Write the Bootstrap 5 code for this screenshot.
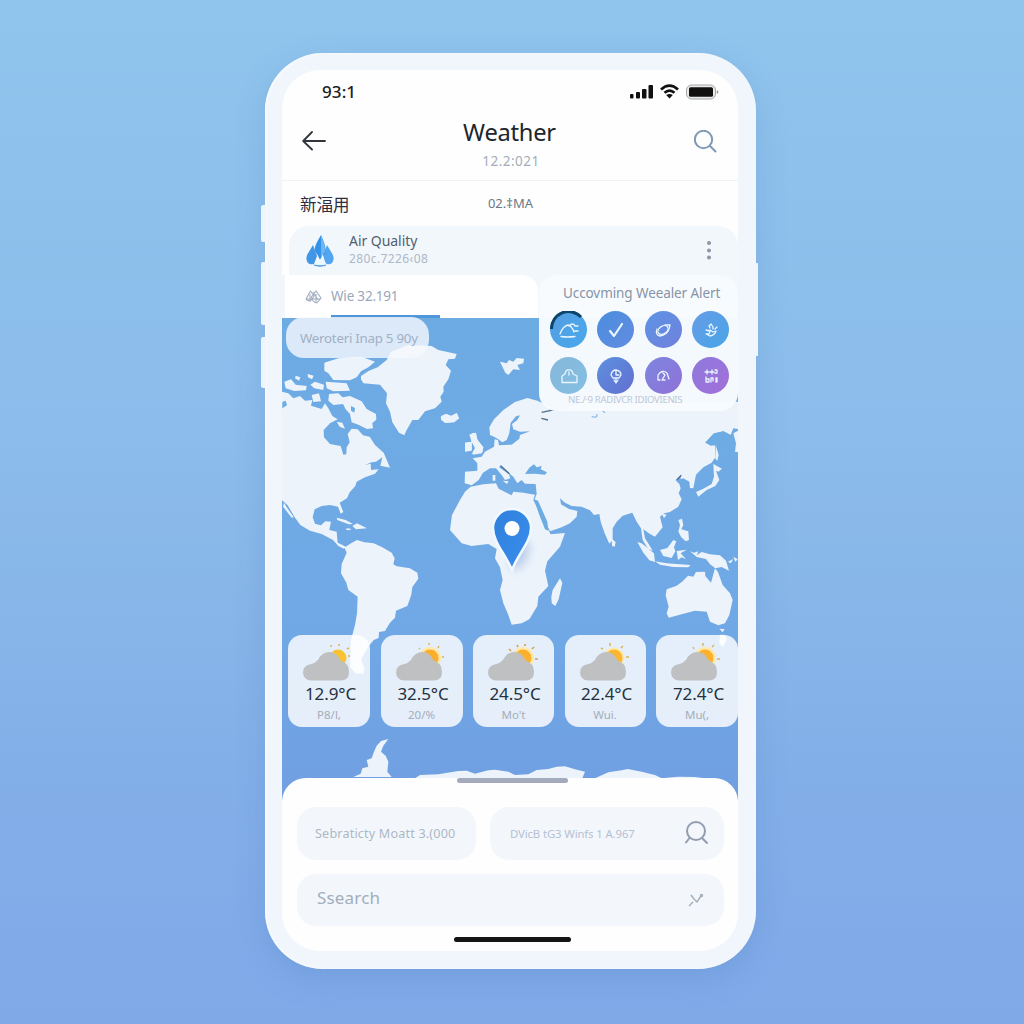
<!DOCTYPE html>
<html lang="en">
<head>
<meta charset="utf-8">
<meta name="viewport" content="width=device-width, initial-scale=1">
<title>Weather</title>
<link href="https://cdn.jsdelivr.net/npm/bootstrap@5.3.0/dist/css/bootstrap.min.css" rel="stylesheet">
<style>
  body{width:1024px;height:1024px;overflow:hidden;font-family:"Noto Sans","Noto Sans CJK SC",sans-serif;
    background:linear-gradient(180deg,#90c5ed 0%,#8bbbea 45%,#83afe8 75%,#80a9e8 100%);line-height:1.2}
  .phone{width:491px;height:916px;margin:53px 0 0 265px;padding:17px 18px 18px 17px;border-radius:58px;background:#f0f6fc;
    box-shadow:0 10px 30px rgba(70,120,190,.24),inset 1px 0 3px #fff}
  .side-key{position:absolute;width:5px;background:#edf5fd;border-radius:2px 0 0 2px;left:-4px}
  .side-key.k1{top:152px;height:37px}.side-key.k2{top:209px;height:63px}.side-key.k3{top:284px;height:51px}
  .side-key.k4{top:210px;height:93px;left:490px;width:3px}
  .screen{border-radius:38px;background:#fefefe}
  .status{height:44px;padding:0 18px 0 40px}
  .clock{font:500 17px "Noto Sans";color:#1d2125;letter-spacing:.1px;margin-top:-2px}
  .topbar{height:67px;border-bottom:1px solid #eef2f6;padding:0 20px}
  .app-title{font-size:23.7px;color:#20262c;letter-spacing:-.25px;line-height:26px;padding-top:1px;margin-left:-3px}
  .app-date{font-size:13.5px;color:#a3adb9;letter-spacing:.5px;line-height:18px;margin-top:7px}
  .meta-row{height:45px;padding:0 18px}
  .place{font:400 16.5px "Noto Sans CJK SC";color:#2b2d40}
  .meta-time{font-size:13px;color:#6c7787;padding-right:187px}
  .air{height:49px;margin-left:7px;border-radius:20px 20px 0 0;background:#f2f7fc;padding:0 25px 0 17px}
  .air-name{font-size:14px;color:#505f72;line-height:16px;letter-spacing:-.05px;margin-top:-2px}
  .air-sub{font-size:12px;color:#adb8c6;line-height:16px;letter-spacing:.4px;margin-top:2px}
  .tabs-zone{height:43px;background:#f2f7fc;padding-left:3px}
  .wind-tab{width:253px;height:43px;border-radius:0 16px 0 0;background:#fff;padding-left:20px}
  .wind-label{height:43px;font-size:13.5px;color:#9ba7ba;width:109px;border-bottom:3px solid #4f97d9;line-height:43px;letter-spacing:-.2px;white-space:nowrap}
  .mapzone{height:460px}
  .worldmap{position:absolute;left:0;top:0;width:456px;height:482px}
  .map-pill{position:absolute;left:4px;top:-1px;width:143px;height:41px;border-radius:18px;background:rgba(246,249,254,.8);font-size:13.3px;color:#a3afc5;padding-left:14px;line-height:42px;white-space:nowrap;letter-spacing:-.25px}
  .alerts{position:absolute;right:0;top:-43px;width:199px;height:136px;border-radius:18px;background:rgba(248,251,254,.975);padding-top:9px}
  .alert-title{font-size:13.5px;color:#8693a6;line-height:19px;letter-spacing:-.09px;padding-left:24px;white-space:nowrap}
  .alert-grid{display:grid;grid-template-columns:repeat(4,37px);column-gap:10.4px;row-gap:9px;padding:8px 0 0 11px}
  .dot{width:37px;height:37px;border-radius:50%}
  .dot svg{width:20px;height:20px;fill:none;stroke:#e9f6ff;stroke-width:1.3;stroke-linecap:round;stroke-linejoin:round}
  .alert-note{font-size:9.6px;color:#bcc7d6;line-height:10px;padding-left:29px;margin-top:1px;white-space:nowrap;letter-spacing:-.35px}
  .pin{position:absolute;left:204px;top:180px}
  .forecast{position:absolute;left:6px;top:317px;width:450px;display:grid;grid-template-columns:82px 82px 81px 81px 82px;justify-content:space-between}
  .day{height:92px;border-radius:14px;background:rgba(255,255,255,.82);padding-top:8px}
  .day svg{width:62px;height:40px;display:block;margin-left:10px}
  .deg{font-size:17px;color:#26313f;line-height:20px;letter-spacing:-.1px;margin-top:1px;padding-left:3px}
  .cond{font-size:11.5px;color:#a4adb9;line-height:16px;margin-top:3px}
  .sheet{position:relative;height:173px;border-radius:24px 24px 38px 38px;background:#fefefe;padding:29px 14px 0 15px}
  .grabber{position:absolute;left:175px;top:0;width:111px;height:5px;border-radius:3px;background:#a3aabd}
  .field{height:53px;border-radius:19px;background:#f3f7fb;color:#adb7c6;font-size:12.6px;letter-spacing:.18px;white-space:nowrap}
  .home-bar{width:117px;height:5px;border-radius:3px;background:#141414;margin:11px 0 0 157px}
</style>
<script src="https://cdn.jsdelivr.net/npm/bootstrap@5.3.0/dist/js/bootstrap.bundle.min.js"></script>
</head>
<body class="d-flow-root">
<svg width="0" height="0" class="position-absolute"><defs>
  <path id="cloud" d="M13 37.500A8 8 0 0 1 5 29.500Q5 22 13.500 21Q17 20 20 17Q24 9 31.500 9Q39 9 42 17Q51 20 51 29Q51 37.500 43 37.500Z" fill="#bfc0c2"/>
</defs></svg>
<div class="d-flex">
<div class="phone position-relative flex-shrink-0">
  <i class="side-key k1"></i><i class="side-key k2"></i><i class="side-key k3"></i><i class="side-key k4"></i>
  <main class="screen h-100 position-relative">
    <div class="status d-flex justify-content-between align-items-center">
      <span class="clock">93:1</span>
      <svg width="91" height="18" viewBox="0 0 91 18">
        <g fill="#111"><rect x="1" y="11" width="3.500" height="4.500" rx="1"/><rect x="7" y="9" width="4" height="6.500" rx="1"/><rect x="13" y="6" width="4.500" height="9.500" rx="1"/><rect x="19.500" y="2" width="4.500" height="13.500" rx="1"/></g>
        <path d="M32 6.500Q40.500-1.200 49 6.500M35.500 9.800Q40.500 5.300 45.500 9.800" fill="none" stroke="#111" stroke-width="2.700"/><path d="M37.200 12Q40.500 9.800 43.800 12L40.500 15.500Z" fill="#111"/>
        <rect x="57.500" y="2" width="29" height="14" rx="5" fill="#e9ece8" stroke="#a4a6a5"/><rect x="60" y="4.300" width="24" height="9.400" rx="1.500" fill="#11120f"/><path d="M88.500 7.500v3" stroke="#999" stroke-width="1.500"/>
      </svg>
    </div>
    <header class="topbar d-flex justify-content-between">
      <svg class="mt-3" width="26" height="22" viewBox="0 0 26 22" fill="none" stroke="#30363c" stroke-width="1.800" stroke-linecap="round" stroke-linejoin="round"><path d="M23 11H1.500M10 2L1.200 11L10 19.500"/></svg>
      <div class="text-center"><div class="app-title mt-1">Weather</div><div class="app-date">12.2:021</div></div>
      <svg class="mt-3" width="24" height="24" viewBox="0 0 24 24" fill="none" stroke="#7e99b6" stroke-width="2" stroke-linecap="round"><circle cx="9.500" cy="9.500" r="8.700"/><path d="M16 16L21.500 21.500"/></svg>
    </header>
    <div class="meta-row d-flex justify-content-between align-items-center"><span class="place">新湢用</span><span class="meta-time">02.‡MA</span></div>
    <section class="air d-flex align-items-center">
      <svg width="28" height="33" viewBox="0 0 28 33">
        <path d="M7 11C3 18 0 21 .4 25C1 30 5 31 8 30L11 22Z" fill="#4396e6"/><path d="M21 11C25 18 28 21 27.600 25C27 30 23 31 20 30L17 22Z" fill="#54a5ef"/><path d="M15 1C11 8 8 13 9 17L14 26L19 20C21 15 18 8 15 1Z" fill="#3592e9"/><path d="M15 1V23L19 18C20 13 17 7 15 1Z" fill="#6db6f4"/><path d="M11 20L14 26L17 20L18 28L22 31H8L11 28Z" fill="#eff8ff"/><path d="M8 31Q14 33 20 31" stroke="#3f93e5" stroke-width="1.300" fill="none"/>
      </svg>
      <div class="flex-grow-1" style="padding-left:15px"><div class="air-name">Air Quality</div><div class="air-sub">280c.7226‹08</div></div>
      <svg width="8" height="22" viewBox="0 0 8 22" fill="#8997a9"><circle cx="4" cy="3" r="2"/><circle cx="4" cy="10.500" r="2"/><circle cx="4" cy="17.500" r="2"/></svg>
    </section>
    <div class="tabs-zone">
      <div class="wind-tab d-flex align-items-center">
        <svg width="17" height="16" viewBox="0 0 17 16" fill="none" stroke="#a4afc0" stroke-width="1.100"><path d="M5.500 2L1 10Q3 13 7 10.500L9 7ZM11 2L6.500 8Q7 13 12 14L16 9ZM1 10H15M8 3L13 11M5 5V13M11 5V13"/></svg>
        <div class="wind-label" style="margin-left:9px">Wie 32.191</div>
      </div>
    </div>
    <section class="mapzone position-relative">
      <svg class="worldmap" viewBox="282 318 456 482">
        <defs><linearGradient id="sea" x2="0" y2="1"><stop stop-color="#6dabe3"/><stop offset=".6" stop-color="#70a9e6"/><stop offset="1" stop-color="#709fe2"/></linearGradient></defs>
        <rect x="282" y="318" width="456" height="482" fill="url(#sea)"/>
        <g fill="#ecf3fb">
          <!-- North America, Arctic islands and Greenland -->
          <g transform="translate(275 340) scale(.33333)">
            <path d="M20 155L40 160L55 175L75 168L90 182L112 180L108 197L140 207L150 190L160 205L172 228L188 238L165 250L146 270L147 292L165 312L197 318L205 344L214 343L215 322L224 307L218 282L230 266L248 268L264 286L284 290L300 315L326 338L330 347L345 383L316 377L322 352L303 365L290 367L270 375L287 371L288 390L311 388L300 401L270 412L245 425L241 438L224 457L216 475L194 488L205 516L197 521L189 500L165 495L140 498L119 508L113 532L120 551L138 556L151 544L168 545L163 570L185 575L188 608L204 616L212 622L206 626L190 618L174 600L140 582L105 572L76 555L58 530L38 496L20 480Z"/>
            <path d="M27 488L36 503L56 532L50 533L24 500ZM185 533L212 540L234 552L221 553L187 540ZM232 558L246 550L276 565L243 568ZM215 565L228 566L225 571L213 569Z"/>
            <path d="M258 108L282 92L308 82L335 60L348 35L400 15L470 18L490 30L545 42L540 56L520 58L512 75L528 92L520 118L505 140L506 155L496 170L500 185L480 205L450 214L430 240L412 240L402 258L395 270L388 286L372 278L352 247L345 215L333 190L336 160L315 134L265 130L258 118Z"/>
            <path d="M148 68L190 55L260 50L300 65L280 82L258 94L245 112L225 121L175 120L160 100L148 92ZM152 125L215 130L225 152L175 154L155 145ZM28 125L48 118L62 134L95 138L93 151L58 153L32 145ZM98 102L116 107L111 118L99 112ZM106 134L120 125L147 134L145 150L118 145ZM62 107L76 112L72 122L60 115ZM110 165L132 160L138 184L115 186ZM162 162L190 160L203 172L225 168L260 184L275 207L303 222L304 239L292 249L294 265L276 267L250 254L230 247L225 222L212 208L204 192L175 195L160 182ZM185 245L202 248L210 266L194 260Z"/>
            <path d="M498 228L512 222L530 228L545 219L552 235L538 247L515 248L500 240ZM592 280L603 278L608 300L625 322L622 337L590 342L600 324L588 302ZM571 308L590 305L590 330L571 333Z"/>
            <path d="M22 186L32 182L36 196L22 205ZM228 198L240 204L238 218L228 212Z" fill="#6dabe3"/>
          </g>
          <!-- South America -->
          <path transform="translate(275 500) scale(.33333)" d="M206 138L215 158L200 192L198 220L214 248L220 270L248 290L246 340L240 375L228 420L225 500L242 520L266 521L268 505L258 478L280 440L296 420L311 414L312 396L330 393L345 368L360 353L363 332L397 318L409 284L412 261L430 236L427 218L405 205L365 199L355 193L359 175L350 158L322 142L296 130L268 127L246 120L228 130L212 140Z"/>
          <!-- Europe, Asia and Africa -->
          <g transform="translate(440 340) scale(.33333)">
            <path d="M148 262L162 238L190 210L225 186L262 174L292 182L320 195L330 210L350 212L380 205L430 185L898 185V268L880 265L872 285L850 274L820 282L797 308L812 317L826 316L836 333L826 352L815 368L790 382L768 404L760 445L750 444L748 425L730 415L708 422L718 432L722 445L716 460L725 478L715 500L690 516L672 520L660 530L668 562L645 590L630 582L610 568L615 595L632 622L638 632L624 626L608 600L603 565L590 545L577 518L548 527L530 545L518 565L518 600L508 611L494 580L482 545L478 522L462 525L450 511L425 500L395 498L375 488L360 475L363 493L387 507L412 513L410 530L390 550L365 562L330 574L318 550L297 512L284 478L290 462L287 432L255 431L245 420L232 430L220 410L200 393L182 376L177 382L207 403L211 415L195 420L185 405L168 385L150 385L129 398L116 420L95 436L74 430L75 395L112 392L112 370L98 355L125 350L135 335L162 320L164 298L174 300L177 316L215 314L238 296L240 285L270 274L240 275L220 268L216 252L232 240L240 226L228 229L212 248L208 280L200 300L187 307L175 298L162 290L150 285Z"/>
            <path d="M92 440L130 433L168 430L176 446L215 466L220 455L250 458L285 464L280 480L300 520L325 570L332 583L375 579L360 620L322 664L315 692L325 738L295 770L292 798L268 838L245 850L215 854L205 825L190 790L180 750L188 720L180 682L165 655L170 627L145 612L95 618L65 610L46 588L30 570L36 525L60 480L75 455ZM360 715L367 728L356 778L346 798L335 790L334 770L338 750Z"/>
            <path d="M180 65L200 70L207 60L220 65L230 54L252 56L250 70L232 75L240 90L220 88L205 105L196 98ZM88 284L100 278L112 300L130 322L126 340L98 344L108 326L94 302ZM75 308L95 305L95 332L75 335ZM2 230L20 222L32 228L50 220L57 235L42 246L15 249L4 240ZM158 405L166 405L166 422L158 422ZM188 422L206 424L201 432Z"/>
            <path d="M255 402L268 383L282 373L290 382L305 378L302 388L321 397L315 404L285 401ZM282 478L294 482L322 545L325 572L315 568L298 525ZM706 422L722 406L722 420ZM795 308L822 280L850 274L872 285L862 308L850 316L836 318L838 334L826 352L826 316Z" fill="#6dabe3"/>
            <path d="M828 318L836 345L832 362L826 356ZM820 372L846 386L835 395L828 392L838 420L826 438L800 450L775 470L768 456L790 446L815 432L822 410ZM515 596L527 606L524 620L516 618Z"/>
            <path d="M182 377L208 401M710 420L724 406M305 217L344 209M304 235L324 240" fill="none" stroke="#526f8c" stroke-width="4"/>
            <path d="M455 230Q475 235 470 222M485 210L495 218" fill="none" stroke="#91bbe7" stroke-width="4"/>
            <path d="M880 280L898 270V338L885 335L888 310Z"/>
          </g>
          <!-- Southeast Asia and Australia -->
          <g transform="translate(480 500) scale(.33333)">
            <path d="M472 126L485 130L522 160L525 186L508 181L490 158ZM525 184L560 190L600 193L632 195L625 202L580 201L540 194ZM540 150L562 144L580 120L589 124L582 142L586 154L575 174L550 168ZM590 153L620 149L602 160L618 178L605 172L594 180ZM595 60L606 56L610 75L604 88L625 94L627 120L617 124L604 112L595 95L600 75ZM630 154L642 158L655 154L650 166L665 156L690 163L720 166L738 182L747 212L725 201L706 205L690 193L678 177L650 171ZM744 185L760 177L752 190ZM760 170L773 178L766 185ZM545 40L560 44L552 55Z"/>
            <path d="M560 268L590 257L608 244L624 227L640 230L648 216L675 215L676 228L693 248L705 205L714 216L728 255L750 280L758 300L748 345L735 370L715 376L690 365L680 335L645 332L605 343L566 353L560 340L566 320L557 286ZM718 386L734 388L728 397Z"/>
            <path d="M720 405Q740 400 739 418Q735 435 728 440L718 430Z"/>
          </g>
          <!-- Antarctica -->
          <path transform="translate(275 625) scale(.33333)" d="M235 456L257 446L262 430L280 425L275 405L290 400L297 380L305 362L318 348L340 342L325 362L318 380L332 392L340 410L337 440L350 456ZM420 460L435 450L490 448L550 438L575 437L600 446L640 436L660 434L700 440L720 450L760 448L785 435L820 432L845 425L870 424L900 433L930 440L922 460L960 460L1000 442L1040 436L1058 432L1100 440L1140 450L1160 460L1210 455L1260 456L1310 463V475H420Z"/>
        </g>
      </svg>
      <div class="map-pill">Weroteri Inap 5 90y</div>
      <aside class="alerts">
        <div class="alert-title">Uccovming Weealer Alert</div>
        <div class="alert-grid">
          <span class="dot d-flex align-items-center justify-content-center position-relative" style="background:linear-gradient(135deg,#579ce1,#47a9ec)"><svg class="position-absolute" viewBox="0 0 37 37" style="width:37px;height:37px;left:0;top:0"><path d="M1.500 18A17 17 0 0 1 31 6" stroke="#0b4569" stroke-width="3" stroke-linecap="butt"/></svg><svg viewBox="0 0 20 20"><path d="M1 14Q4 6 9 5Q13 6 15 12M10 6Q14 2 16 6H19M2 16.500Q8 17.500 16 16.500M16 11H19"/></svg></span>
          <span class="dot d-flex align-items-center justify-content-center" style="background:linear-gradient(135deg,#4b8ede,#628be0)"><svg viewBox="0 0 20 20"><path d="M4 11L8 16L16 4" stroke-width="2.200"/></svg></span>
          <span class="dot d-flex align-items-center justify-content-center" style="background:linear-gradient(135deg,#5c94e5,#7180dc)"><svg viewBox="0 0 20 20"><ellipse cx="10" cy="10" rx="5.500" ry="3.800" transform="rotate(-35 10 10)"/><path d="M4 9Q2 15 7 16Q14 15 16 9L17 5H12"/></svg></span>
          <span class="dot d-flex align-items-center justify-content-center" style="background:linear-gradient(135deg,#669ce7,#48a5e7)"><svg viewBox="0 0 20 20"><path d="M9 8L8 6L10 4L12 7V9M14 9L16 7M5 10L9 11L8 14H5L9 16Q14 15 15 11L12 12L9 10"/></svg></span>
          <span class="dot d-flex align-items-center justify-content-center" style="background:linear-gradient(135deg,#87b7da,#83bfe4)"><svg viewBox="0 0 20 20"><path d="M3 16.500V10L6 8Q7 3 10 4Q13 3 14 8L18 10V16.500ZM10 6V9"/></svg></span>
          <span class="dot d-flex align-items-center justify-content-center" style="background:linear-gradient(135deg,#5d91de,#626ed0)"><svg viewBox="0 0 20 20"><path d="M5 9Q6 4 10 4Q15 5 15 9L13 12H7ZM10 5V9H13M8 14L10 17L12 14M10 12V16"/></svg></span>
          <span class="dot d-flex align-items-center justify-content-center" style="background:linear-gradient(135deg,#7c86e0,#9070d7)"><svg viewBox="0 0 20 20"><path d="M5 14V9Q9 3 14 7L16 13M5 14H7M10 7L12 9L9 14H12"/></svg></span>
          <span class="dot d-flex align-items-center justify-content-center" style="background:linear-gradient(135deg,#8e79dc,#a26fd8)"><svg viewBox="0 0 20 20"><path d="M6 4V8M4 6H8M11 4V8M9 6H13M14 4H16V7H14M5 11V16H8V13H5M10 16V12H12V15M15 16V12H16V16"/></svg></span>
        </div>
        <div class="alert-note">NE./·9 RADIVCR IDIOVIENIS</div>
      </aside>
      <svg class="pin" width="70" height="86" viewBox="0 0 70 86">
        <defs><linearGradient id="pinfill" x1="0" x2="1" y2="1"><stop stop-color="#2f80dd"/><stop offset="1" stop-color="#3b8eec"/></linearGradient><filter id="soft" x="-60%" y="-60%" width="220%" height="220%"><feGaussianBlur stdDeviation="4"/></filter></defs>
        <ellipse cx="34" cy="57" rx="8" ry="16" transform="rotate(25 34 57)" fill="#7d99cf" opacity=".4" filter="url(#soft)"/>
        <path d="M26 72C20 57 7 44 7 30A19 19 0 0 1 45 30C45 44 31 57 26 72Z" fill="url(#pinfill)" stroke="#eff9ff" stroke-width="2.500"/><circle cx="26" cy="30.500" r="7.500" fill="#fff"/>
      </svg>
      <div class="forecast text-center">
        <div class="day"><svg viewBox="0 0 62 40"><circle cx="40" cy="15" r="8.500" fill="#fbc331"/><path d="M33 4V2M41 3V1M49 6L51 5M50 13H52" stroke="#dfb25a" stroke-width="1.500"/><use href="#cloud"/></svg><div class="deg">12.9°C</div><div class="cond">P8/l,</div></div>
        <div class="day"><svg viewBox="0 0 62 40"><circle cx="39" cy="15" r="11" fill="#ffe7a6"/><circle cx="39" cy="15" r="8.500" fill="#fbad2d"/><path d="M29 6L28 5M38 2V0M47 5L48 3M51 14H53" stroke="#dfb25a" stroke-width="1.500"/><use href="#cloud"/></svg><div class="deg">32.5°C</div><div class="cond">20/%</div></div>
        <div class="day"><svg viewBox="0 0 62 40"><circle cx="40" cy="15" r="11" fill="#ffe7a6"/><circle cx="40" cy="15" r="8.500" fill="#fbb12d"/><path d="M28 8L26 6M35 4L34 2M42 3V1M49 6L51 4M52 16H55" stroke="#d9a54c" stroke-width="1.700"/><use href="#cloud"/></svg><div class="deg">24.5°C</div><div class="cond">Mo't</div></div>
        <div class="day"><svg viewBox="0 0 62 40"><circle cx="39" cy="15" r="10.500" fill="#ffe7a6"/><circle cx="39" cy="15" r="8.500" fill="#fbb633"/><path d="M28 6L26 5M35 3V0M46 5L48 3M51 14H54" stroke="#dfb25a" stroke-width="1.500"/><use href="#cloud"/></svg><div class="deg">22.4°C</div><div class="cond">Wui.</div></div>
        <div class="day"><svg viewBox="0 0 62 40"><circle cx="39" cy="15" r="11" fill="#ffe7a6"/><circle cx="39" cy="15" r="8.500" fill="#fbb12d"/><path d="M28 6L27 4M37 3V0M46 4L48 2M51 16H54" stroke="#dfb25a" stroke-width="1.500"/><use href="#cloud"/></svg><div class="deg">72.4°C</div><div class="cond">Mu(,</div></div>
      </div>
    </section>
    <section class="sheet">
      <span class="grabber"></span>
      <div class="d-flex justify-content-between">
        <div class="field d-flex align-items-center" style="width:179px;padding-left:18px">Sebraticty Moatt 3.(000</div>
        <div class="field d-flex align-items-center justify-content-between" style="width:234px;padding:0 16px 0 20px;font-size:11.3px;letter-spacing:-.1px;color:#b5c0d4"><span>DVicB tG3 Winfs 1 A.967</span>
          <svg width="24" height="25" viewBox="0 0 24 25" fill="none" stroke="#929daf" stroke-width="2" stroke-linecap="round"><circle cx="12" cy="10" r="9"/><path d="M18 17L23 22M5.500 17L2 21.500"/></svg></div>
      </div>
      <div class="field d-flex align-items-center justify-content-between" style="height:52px;margin-top:14px;padding:0 19px 0 20px;font-size:17px;color:#a1aebc"><span style="margin-top:-3px">Ssearch</span>
        <svg width="17" height="15" viewBox="0 0 17 15" fill="none" stroke="#9facba" stroke-width="1.400"><path d="M3 2L6 6M6 6L9 9L13 3M5 9L1 13"/><circle cx="13.500" cy="2.500" r="1"/></svg></div>
      <div class="home-bar"></div>
    </section>
  </main>
</div>
</div>
</body>
</html>
